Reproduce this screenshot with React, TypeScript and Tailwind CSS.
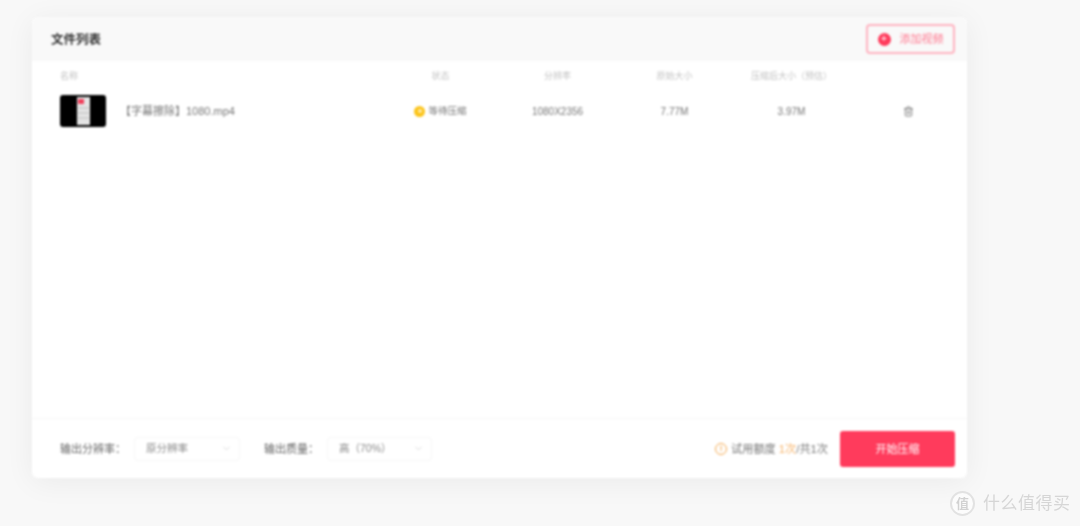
import { ChevronDown, Trash2 } from 'lucide-react'

const font = { fontFamily: '"Liberation Sans", "Noto Sans CJK SC", sans-serif' }

const columns = ['状态', '分辨率', '原始大小', '压缩后大小（预估）']

function Select({ value, width }: { value: string; width: string }) {
  return (
    <div className={`flex h-6 items-center justify-between rounded-sm border border-[#f6f6f6] pl-[11px] pr-[7px] text-[10.5px] text-[#8a8a8a] ${width}`}>
      <span className="pt-[1px]">{value}</span>
      <ChevronDown size={11} strokeWidth={1} className="text-[#b5b5b5]" />
    </div>
  )
}

function Thumbnail() {
  return (
    <div className="flex h-8 w-[46px] shrink-0 justify-center rounded-[3px] bg-black">
      <div className="my-[2px] flex w-[13px] flex-col gap-[3px] bg-[#e4e4e4] px-[1px] pt-[2px]">
        <div className="h-[5px] w-[6px] bg-[#f0405c]" />
        <div className="h-[2px] bg-[#d0d0d0]" />
        <div className="h-[2px] bg-[#d0d0d0]" />
        <div className="h-[2px] bg-[#d0d0d0]" />
      </div>
    </div>
  )
}

export default function App() {
  return (
    <div className="relative h-[526px] w-[1080px] overflow-hidden bg-[#f8f8f8] pl-8 pt-[17px]" style={font}>
      <div className="flex h-[461px] w-[935px] flex-col overflow-hidden rounded-md bg-white shadow-[0_4px_30px_rgba(0,0,0,0.06)] blur-[0.8px]">
        <header className="flex h-11 shrink-0 items-center justify-between bg-[#f9f9f9] pl-[19px] pr-3">
          <h1 className="pt-[2px] text-[12.5px] font-bold text-[#333333]">文件列表</h1>
          <button className="flex h-[30px] w-[89px] items-center justify-center gap-[9px] rounded-sm border-2 border-[#ffb3c0] text-[11px] text-[#ff7b92]">
            <span className="flex h-[13px] w-[13px] items-center justify-center rounded-full bg-[#ff3b5c] text-[10px] leading-none text-white">+</span>
            <span className="pt-[1px]">添加视频</span>
          </button>
        </header>

        <div className="grid grid-cols-[350px_repeat(5,117px)] items-center pt-[9px] text-center text-[9px] leading-[13px] text-[#c4c4c4]">
          <div className="pl-7 text-left">名称</div>
          {columns.map((c) => (
            <div key={c}>{c}</div>
          ))}
        </div>

        <div className="mt-3 grid grid-cols-[350px_repeat(5,117px)] items-center text-center text-[10px] text-[#777777]">
          <div className="flex items-center gap-[14px] pl-7 text-left">
            <Thumbnail />
            <span className="text-[11px] text-[#777777]">【字幕擦除】1080.mp4</span>
          </div>
          <div className="flex items-center justify-center gap-[3px] text-[9.5px]">
            <span className="flex h-[11px] w-[11px] items-center justify-center rounded-full bg-[#fcc419]">
              <span className="h-1 w-1 rounded-full bg-[#ffe9a8]" />
            </span>
            等待压缩
          </div>
          <div>1080X2356</div>
          <div>7.77M</div>
          <div>3.97M</div>
          <div className="flex justify-center">
            <Trash2 size={11} className="text-[#777777]" />
          </div>
        </div>

        <footer className="mt-auto flex h-[60px] shrink-0 items-center justify-between border-t border-[#f7f7f7] pl-7 pr-3">
          <div className="flex items-center text-[11px] text-[#666666]">
            <span className="mr-2 pt-[2px]">输出分辨率：</span>
            <Select value="原分辨率" width="w-[106px]" />
            <span className="ml-6 mr-2 pt-[2px]">输出质量：</span>
            <Select value="高（70%）" width="w-[105px]" />
          </div>
          <div className="flex items-center">
            <span className="mr-1 flex h-3 w-3 items-center justify-center rounded-full border border-[#f5a94f] text-[8px] font-bold leading-none text-[#f5a94f]">!</span>
            <span className="pt-[1px] text-[11.2px] text-[#777777]">
              试用额度 <span className="text-[#f7b267]">1次</span>/共1次
            </span>
            <button className="ml-3 h-9 w-[115px] rounded-[3px] bg-[#ff3b5c] pt-[1px] text-[11px] text-white">开始压缩</button>
          </div>
        </footer>
      </div>

      <div className="absolute left-[950px] top-[491px] flex items-center gap-2 text-[#d2d2d2] blur-[0.5px]">
        <span className="flex h-[25px] w-[25px] items-center justify-center rounded-full border-2 border-[#e2e2e2] bg-white/60 text-[13px] font-bold leading-none">值</span>
        <span className="text-[17px] leading-6 tracking-[0.5px] text-[#d6d6d6]">什么值得买</span>
      </div>
    </div>
  )
}
